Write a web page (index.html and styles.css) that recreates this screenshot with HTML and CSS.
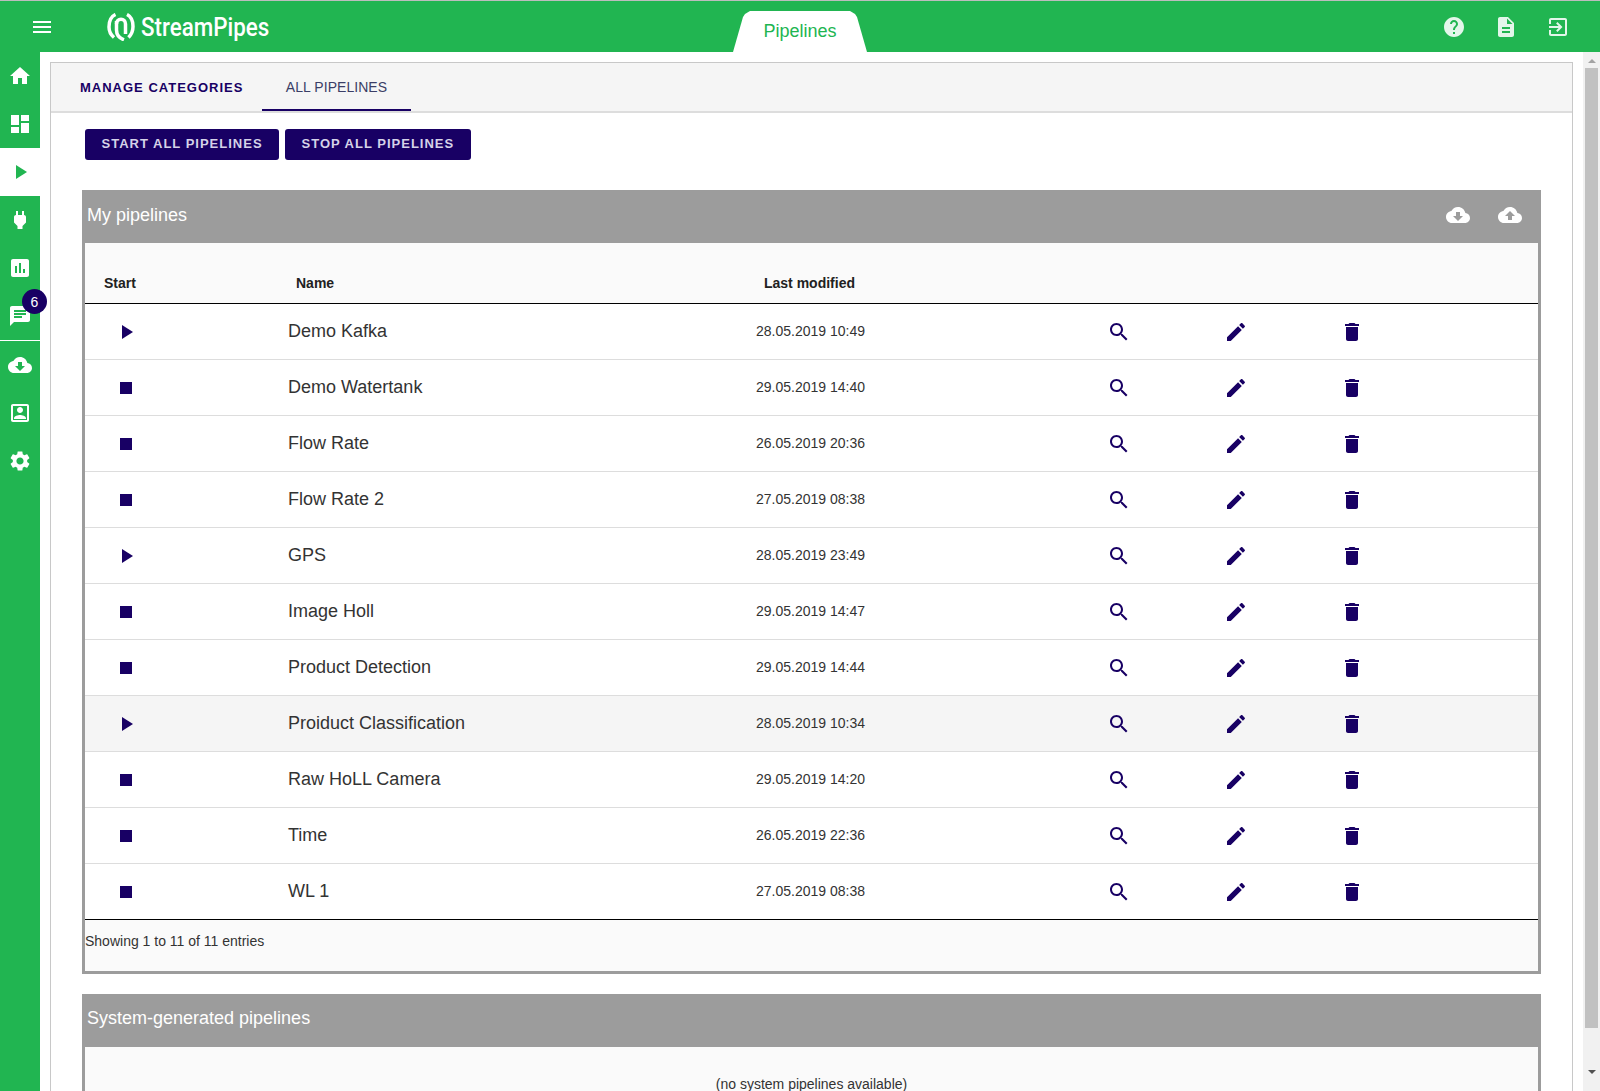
FILE: index.html
```html
<!DOCTYPE html>
<html lang="en">
<head>
<meta charset="utf-8">
<title>StreamPipes - Pipelines</title>
<link rel="stylesheet" href="styles.css">
</head>
<body>
<div class="app">
  <header class="topbar">
    <button class="menu-btn" aria-label="Menu"><svg viewBox="0 0 24 24" class="icon24"><path d="M3 18h18v-2H3v2zm0-5h18v-2H3v2zm0-7v2h18V6H3z"/></svg></button>
    <div class="logo">
      <svg class="logo-mark" viewBox="0 0 28 28"><path d="M8.500 1.500C4 3.500 2 8.500 2 14c0 4.500 2 8 5 10.500"/><path d="M9.500 8V17c0 4.500 2.500 8 7.500 9.800"/><path d="M9.500 11c0-3 2-4.700 4.500-4.700S18.500 8 18.500 11v10"/><path d="M20 1.500c4 2 6 6.500 6 12 0 4.500-2 8.500-4.500 11"/></svg>
      <span class="logo-text">StreamPipes</span>
    </div>
    <div class="page-tab">Pipelines</div>
    <div class="top-actions">
      <svg viewBox="0 0 24 24" class="icon24"><path d="M12 2C6.480 2 2 6.480 2 12s4.480 10 10 10 10-4.480 10-10S17.520 2 12 2zm1 17h-2v-2h2v2zm2.070-7.750l-.9.920C13.450 12.900 13 13.500 13 15h-2v-.5c0-1.100.45-2.100 1.170-2.830l1.240-1.260c.37-.36.59-.86.59-1.410 0-1.100-.9-2-2-2s-2 .9-2 2H8c0-2.210 1.790-4 4-4s4 1.790 4 4c0 .88-.36 1.680-.93 2.250z"/></svg>
      <svg viewBox="0 0 24 24" class="icon24"><path d="M14 2H6c-1.100 0-1.990.9-1.990 2L4 20c0 1.100.89 2 1.990 2H18c1.100 0 2-.9 2-2V8l-6-6zm2 16H8v-2h8v2zm0-4H8v-2h8v2zm-3-5V3.500L18.500 9H13z"/></svg>
      <svg viewBox="0 0 24 24" class="icon24"><path d="M10.090 15.590L11.500 17l5-5-5-5-1.410 1.410L12.670 11H3v2h9.670l-2.580 2.590zM19 3H5c-1.110 0-2 .9-2 2v4h2V5h14v14H5v-4H3v4c0 1.100.89 2 2 2h14c1.100 0 2-.9 2-2V5c0-1.100-.9-2-2-2z"/></svg>
    </div>
  </header>
  <div class="body-row">
    <nav class="sidebar">
      <a class="nav-item"><svg viewBox="0 0 24 24" class="icon24"><path d="M10 20v-6h4v6h5v-8h3L12 3 2 12h3v8z"/></svg></a>
      <a class="nav-item"><svg viewBox="0 0 24 24" class="icon24"><path d="M3 13h8V3H3v10zm0 8h8v-6H3v6zm10 0h8V11h-8v10zm0-18v6h8V3h-8z"/></svg></a>
      <a class="nav-item active"><svg viewBox="0 0 24 24" class="icon24"><path d="M8 5v14l11-7z"/></svg></a>
      <a class="nav-item"><svg viewBox="0 0 24 24" class="icon24"><path d="M16 7V3h-2v4h-4V3H8v4h-.01C7 6.990 6 7.990 6 8.990v5.490L9.500 18v3h5v-3l3.500-3.510v-5.500c0-1-1-2-2-1.990z"/></svg></a>
      <a class="nav-item"><svg viewBox="0 0 24 24" class="icon24"><path d="M19 3H5c-1.100 0-2 .9-2 2v14c0 1.100.9 2 2 2h14c1.100 0 2-.9 2-2V5c0-1.100-.9-2-2-2zM9 17H7v-7h2v7zm4 0h-2V7h2v10zm4 0h-2v-4h2v4z"/></svg></a>
      <a class="nav-item"><svg viewBox="0 0 24 24" class="icon24"><path d="M20 2H4c-1.100 0-1.990.9-1.990 2L2 22l4-4h14c1.100 0 2-.9 2-2V4c0-1.100-.9-2-2-2zM6 9h12v2H6V9zm8 5H6v-2h8v2zm4-6H6V6h12v2z"/></svg><span class="badge">6</span></a>
      <div class="nav-divider"></div>
      <a class="nav-item"><svg viewBox="0 0 24 24" class="icon24"><path d="M19.350 10.040C18.670 6.590 15.640 4 12 4 9.110 4 6.600 5.640 5.350 8.040 2.340 8.360 0 10.910 0 14c0 3.310 2.690 6 6 6h13c2.760 0 5-2.240 5-5 0-2.640-2.050-4.780-4.650-4.960zM17 13l-5 5-5-5h3V9h4v4h3z"/></svg></a>
      <a class="nav-item"><svg viewBox="0 0 24 24" class="icon24"><path d="M3 5v14c0 1.100.89 2 2 2h14c1.100 0 2-.9 2-2V5c0-1.100-.9-2-2-2H5c-1.110 0-2 .9-2 2zm2 0h14v14H5V5zm7 7c1.660 0 3-1.340 3-3s-1.340-3-3-3-3 1.340-3 3 1.340 3 3 3zm6 6H6v-1c0-2 4-3.100 6-3.100s6 1.100 6 3.100v1z"/></svg></a>
      <a class="nav-item"><svg viewBox="0 0 24 24" class="icon24"><path d="M19.140 12.940c.04-.3.060-.61.060-.94 0-.32-.02-.64-.07-.94l2.030-1.580c.18-.14.230-.41.120-.61l-1.920-3.320c-.12-.22-.37-.29-.59-.22l-2.390.96c-.5-.38-1.030-.7-1.620-.94l-.36-2.540c-.04-.24-.24-.41-.48-.41h-3.840c-.24 0-.43.170-.47.410l-.36 2.540c-.59.240-1.130.57-1.620.94l-2.390-.96c-.22-.08-.47 0-.59.220L2.740 8.870c-.12.210-.08.470.12.610l2.030 1.580c-.05.3-.09.630-.09.940s.02.640.07.940l-2.030 1.580c-.18.140-.23.410-.12.610l1.920 3.320c.12.220.37.290.59.220l2.390-.96c.5.380 1.030.7 1.620.94l.36 2.540c.05.240.24.410.48.410h3.840c.24 0 .44-.17.470-.41l.36-2.540c.59-.24 1.130-.56 1.620-.94l2.390.96c.22.080.47 0 .59-.22l1.920-3.320c.12-.22.070-.47-.12-.61l-2.010-1.580zM12 15.600c-1.980 0-3.600-1.620-3.600-3.600s1.620-3.600 3.600-3.600 3.600 1.620 3.600 3.600-1.620 3.600-3.600 3.600z"/></svg></a>
    </nav>
    <main class="content">
      <div class="panel">
        <div class="tabs">
          <div class="tab tab-strong">MANAGE CATEGORIES</div>
          <div class="tab tab-current">ALL PIPELINES</div>
        </div>
        <div class="actions">
          <button class="btn">START ALL PIPELINES</button>
          <button class="btn">STOP ALL PIPELINES</button>
        </div>
        <section class="card">
          <div class="card-head">
            <span class="card-title">My pipelines</span>
            <div class="card-icons">
              <svg viewBox="0 0 24 24" class="icon-cloud"><path d="M19.350 10.040C18.670 6.590 15.640 4 12 4 9.110 4 6.600 5.640 5.350 8.040 2.340 8.360 0 10.910 0 14c0 3.310 2.690 6 6 6h13c2.760 0 5-2.240 5-5 0-2.640-2.050-4.780-4.650-4.960zM17 13l-5 5-5-5h3V9h4v4h3z"/></svg>
              <svg viewBox="0 0 24 24" class="icon-cloud"><path d="M19.350 10.040C18.670 6.590 15.640 4 12 4 9.110 4 6.600 5.640 5.350 8.040 2.340 8.360 0 10.910 0 14c0 3.310 2.690 6 6 6h13c2.760 0 5-2.240 5-5 0-2.640-2.050-4.780-4.650-4.960zM14 13v4h-4v-4H7l5-5 5 5h-3z"/></svg>
            </div>
          </div>
          <div class="card-body">
            <table class="pipes">
              <thead>
                <tr><th class="c-start">Start</th><th class="c-name">Name</th><th class="c-date">Last modified</th><th class="c-act"></th><th class="c-act"></th><th class="c-act"></th><th></th></tr>
              </thead>
              <tbody id="rows"></tbody>
            </table>
            <div class="table-foot">Showing 1 to 11 of 11 entries</div>
          </div>
        </section>
        <section class="card card-system">
          <div class="card-head"><span class="card-title">System-generated pipelines</span></div>
          <div class="card-body empty">(no system pipelines available)</div>
        </section>
      </div>
    </main>
    <div class="scrollbar">
      <span class="arrow arrow-up"></span>
      <div class="thumb"></div>
      <span class="arrow arrow-down"></span>
    </div>
  </div>
</div>
<template id="row-tpl">
  <tr>
    <td class="c-start"><svg class="state" viewBox="0 0 13 14"><path class="state-path"/></svg></td>
    <td class="c-name"></td>
    <td class="c-date"></td>
    <td class="c-act"><svg viewBox="0 0 24 24" class="icon24 ink"><path d="M15.500 14h-.79l-.28-.27C15.410 12.590 16 11.110 16 9.500 16 5.910 13.090 3 9.500 3S3 5.910 3 9.500 5.910 16 9.500 16c1.610 0 3.090-.59 4.230-1.570l.27.280v.79l5 4.990L20.490 19l-4.990-5zm-6 0C7.010 14 5 11.990 5 9.500S7.010 5 9.500 5 14 7.010 14 9.500 11.990 14 9.500 14z"/></svg></td>
    <td class="c-act"><svg viewBox="0 0 24 24" class="icon24 ink"><path d="M3 17.250V21h3.750L17.810 9.940l-3.750-3.750L3 17.250zM20.710 7.040c.39-.39.390-1.020 0-1.410l-2.340-2.340c-.39-.39-1.020-.39-1.410 0l-1.830 1.830 3.750 3.750 1.830-1.830z"/></svg></td>
    <td class="c-act c-trash"><svg viewBox="0 0 24 24" class="icon24 ink"><path d="M6 19c0 1.100.9 2 2 2h8c1.100 0 2-.9 2-2V7H6v12zM19 4h-3.500l-1-1h-5l-1 1H5v2h14V4z"/></svg></td>
    <td></td>
  </tr>
</template>
<script src="app.js"></script>
</body>
</html>
```

FILE: styles.css
```css
* { box-sizing: border-box; }
html, body { margin: 0; height: 1091px; overflow: hidden; background: #fff; }
body { font-family: "Liberation Sans", Arial, sans-serif; color: #212121; }
.app { display: flex; flex-direction: column; height: 1091px; border-top: 1px solid #bdbdbd; }
.topbar { height: 51px; flex: none; background: #21b551; display: flex; align-items: center; color: #fff; position: relative; }
.menu-btn { width: 24px; height: 24px; padding: 0; margin-left: 30px; border: 0; background: none; }
.icon24 { width: 24px; height: 24px; display: block; fill: currentColor; }
.menu-btn .icon24 { fill: #fff; }
.logo { display: flex; align-items: center; margin-left: 53px; gap: 6px; }
.logo-mark { width: 28px; height: 28px; fill: none; stroke: #fff; stroke-width: 3.500; }
.logo-text { font-family: Roboto, sans-serif; font-weight: 500; font-size: 26px; transform: scaleX(.86); transform-origin: left center; white-space: nowrap; }
.page-tab { position: absolute; left: 733px; bottom: 0; width: 134px; height: 41px; background: #fff; color: #21b551; font-size: 18px; display: flex; align-items: center; justify-content: center; clip-path: polygon(0 100%, 10px 6px, 12px 3px, 17px 0, 117px 0, 122px 3px, 124px 6px, 134px 100%); }
.top-actions { margin-left: auto; display: flex; gap: 28px; margin-right: 30px; color: #e3f6ea; }
.body-row { flex: 1; display: flex; min-height: 0; }
.sidebar { width: 40px; flex: none; background: #21b551; color: #fff; display: flex; flex-direction: column; }
.nav-item { height: 48px; display: flex; align-items: center; justify-content: center; position: relative; flex: none; }
.nav-item.active { background: #fff; color: #21b551; }
.nav-divider { height: 1px; background: #fff; flex: none; }
.badge { position: absolute; left: 22px; top: -3px; width: 25px; height: 25px; border-radius: 50%; background: #180064; color: #fff; font-size: 14px; display: flex; align-items: center; justify-content: center; }
.content { flex: 1; min-width: 0; padding: 10px 10px 0; overflow: hidden; }
.panel { border: 1px solid #c8c8c8; border-bottom: 0; height: 1100px; }
.tabs { height: 50px; background: #f5f5f5; border-bottom: 2px solid #ddd; display: flex; }
.tab { height: 48px; display: flex; align-items: center; color: #180064; white-space: nowrap; }
.tab-strong { font-size: 13px; font-weight: 700; letter-spacing: 1px; padding-left: 29px; width: 211px; }
.tab-current { font-size: 14px; width: 149px; padding-top: 2px; justify-content: center; border-bottom: 2px solid #180064; color: #3b3e66; font-weight: 400; letter-spacing: .05px; }
.actions { display: flex; gap: 6px; padding: 16px 0 0 34px; height: 77px; }
.btn { height: 31px; padding: 0 16.500px 3px; background: #180064; color: #d5d2e8; border: 0; border-radius: 3px; font: 700 13px "Liberation Sans", Arial, sans-serif; letter-spacing: 1px; white-space: nowrap; }
.card { margin-left: 31px; width: 1459px; border: 3px solid #9c9c9c; border-top: 0; background: #fafafa; }
.card-head { height: 53px; margin: 0 -3px; background: #9c9c9c; color: #fff; display: flex; align-items: center; padding: 0 19px 3px 5px; }
.card-title { font-size: 18px; }
.card-icons { margin-left: auto; display: flex; gap: 28px; }
.icon-cloud { width: 24px; height: 24px; fill: #fff; display: block; }
.pipes { width: 100%; border-collapse: collapse; table-layout: fixed; }
.pipes th { height: 60px; padding: 20px 0 0; font-size: 14px; font-weight: 700; text-align: left; border-bottom: 1px solid #000; }
.pipes td { height: 56px; padding: 0; background: #fff; border-bottom: 1px solid #ddd; }
.pipes td svg { margin-top: 2px; }
.pipes tbody tr:nth-child(8) td { background: #f5f5f5; }
.pipes tbody tr:last-child td { border-bottom: 1px solid #000; }
.c-start { width: 195px; padding-left: 19px !important; }
.c-name { width: 467px; font-size: 18px; }
th.c-name { padding-left: 16px !important; }
td.c-name { padding-left: 8px !important; color: #333; }
.c-date { width: 358px; }
td.c-date { font-size: 14px; color: #333; padding-left: 9px !important; }
th.c-date { padding-left: 17px !important; }
.c-act { width: 117px; }
td.c-act { padding-left: 2px !important; }
td.c-trash { padding-left: 1px !important; }
.state { display: block; width: 13px; height: 14px; margin-left: 16px; fill: #180064; }
.ink { fill: #180064; }
.table-foot { height: 51px; padding-top: 11px; font-size: 14px; line-height: 20px; color: #333; }
.card-system { margin-top: 20px; }
.empty { height: 60px; padding-top: 29px; text-align: center; font-size: 14px; line-height: 16px; color: #333; }
.scrollbar { width: 17px; flex: none; background: #f1f1f1; display: flex; flex-direction: column; align-items: center; padding-top: 7px; }
.arrow { width: 0; height: 0; border-left: 4px solid transparent; border-right: 4px solid transparent; flex: none; }
.arrow-up { border-bottom: 4px solid #a3a3a3; }
.arrow-down { border-top: 4px solid #505050; margin-top: 42px; }
.thumb { width: 13px; height: 960px; margin-top: 5px; background: #c1c1c1; flex: none; }
```

FILE: app.js
```js
var DATA = [
  ["p", "Demo Kafka", "28.05.2019 10:49"],
  ["s", "Demo Watertank", "29.05.2019 14:40"],
  ["s", "Flow Rate", "26.05.2019 20:36"],
  ["s", "Flow Rate 2", "27.05.2019 08:38"],
  ["p", "GPS", "28.05.2019 23:49"],
  ["s", "Image Holl", "29.05.2019 14:47"],
  ["s", "Product Detection", "29.05.2019 14:44"],
  ["p", "Proiduct Classification", "28.05.2019 10:34"],
  ["s", "Raw HoLL Camera", "29.05.2019 14:20"],
  ["s", "Time", "26.05.2019 22:36"],
  ["s", "WL 1", "27.05.2019 08:38"]
];
var tpl = document.getElementById("row-tpl");
var body = document.getElementById("rows");
DATA.forEach(function (r) {
  var n = tpl.content.cloneNode(true);
  n.querySelector(".state-path").setAttribute("d", r[0] === "p" ? "M2 0l11 7-11 7z" : "M0 1h12v12H0z");
  n.querySelector("td.c-name").textContent = r[1];
  n.querySelector("td.c-date").textContent = r[2];
  body.appendChild(n);
});
```
